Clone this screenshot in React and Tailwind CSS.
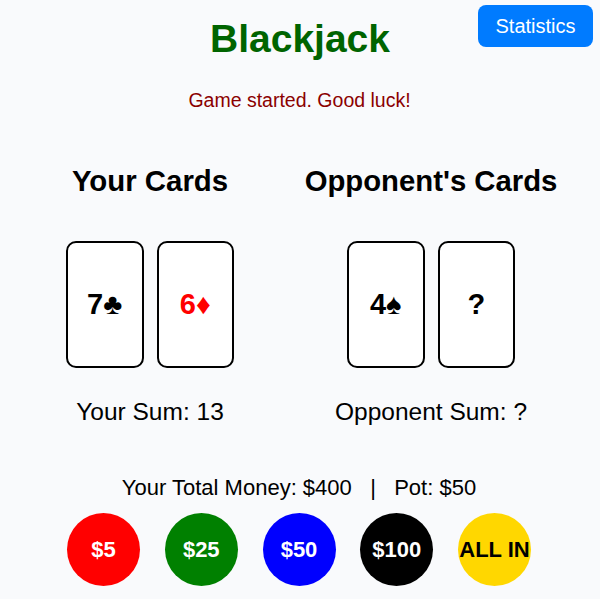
import React from "react";

const font = { fontFamily: '"Liberation Sans", Arial, sans-serif' };

function Card({ rank, suit, red }) {
  return (
    <div className={`flex h-[126.5px] w-[77.6px] items-center justify-center rounded-[10px] border-[2.4px] border-black bg-white text-[29px] font-bold ${red ? "text-[#ff0000]" : "text-black"}`}>
      {rank}{suit}
    </div>
  );
}

function Chip({ label, color, dark }) {
  return (
    <button className={`flex h-[73px] w-[73px] shrink-0 items-center justify-center whitespace-nowrap rounded-full text-[22px] font-bold ${color} ${dark ? "text-black" : "text-white"}`}>
      {label}
    </button>
  );
}

export default function App() {
  return (
    <div style={font} className="relative h-[599px] w-[600px] overflow-hidden bg-[#f9fafc] text-black">
      <button className="absolute right-[7px] top-[5px] h-[42px] w-[115px] rounded-lg bg-[#007bff] text-[20px] text-white">
        Statistics
      </button>
      <h1 className="pt-[16px] text-center text-[39px] font-bold leading-[46px] text-[#006400]">Blackjack</h1>
      <p className="mt-[27px] pr-[1px] text-center text-[19.5px] leading-[23px] text-[#8b0000]">Game started. Good luck!</p>
      <div className="mt-[52px] flex pl-[66px] gap-[71px]">
        <div className="flex w-[168px] flex-col items-center">
          <h2 className="whitespace-nowrap text-[29.4px] font-bold leading-[34px]">Your Cards</h2>
          <div className="mt-[43px] flex gap-[13px]">
            <Card rank="7" suit="♣" />
            <Card rank="6" suit="♦" red />
          </div>
          <p className="mt-[30px] whitespace-nowrap text-[24.5px] leading-[28px]">Your Sum: 13</p>
        </div>
        <div className="flex w-[252px] flex-col items-center">
          <h2 className="whitespace-nowrap text-[29.3px] font-bold leading-[34px]">Opponent's Cards</h2>
          <div className="mt-[43px] flex gap-[13px]">
            <Card rank="4" suit="♠" />
            <Card rank="?" />
          </div>
          <p className="mt-[30px] whitespace-nowrap text-[24.5px] leading-[28px]">Opponent Sum: ?</p>
        </div>
      </div>
      <p className="mt-[49px] pr-[2px] whitespace-pre text-center text-[22px] leading-[25px]">{"Your Total Money: $400  \u00a0|\u00a0  Pot: $50"}</p>
      <div className="mt-[13px] flex gap-[24.75px] pl-[67px]">
        <Chip label="$5" color="bg-[#ff0000]" />
        <Chip label="$25" color="bg-[#008000]" />
        <Chip label="$50" color="bg-[#0000ff]" />
        <Chip label="$100" color="bg-black" />
        <Chip label="ALL IN" color="bg-[#ffd700]" dark />
      </div>
    </div>
  );
}
